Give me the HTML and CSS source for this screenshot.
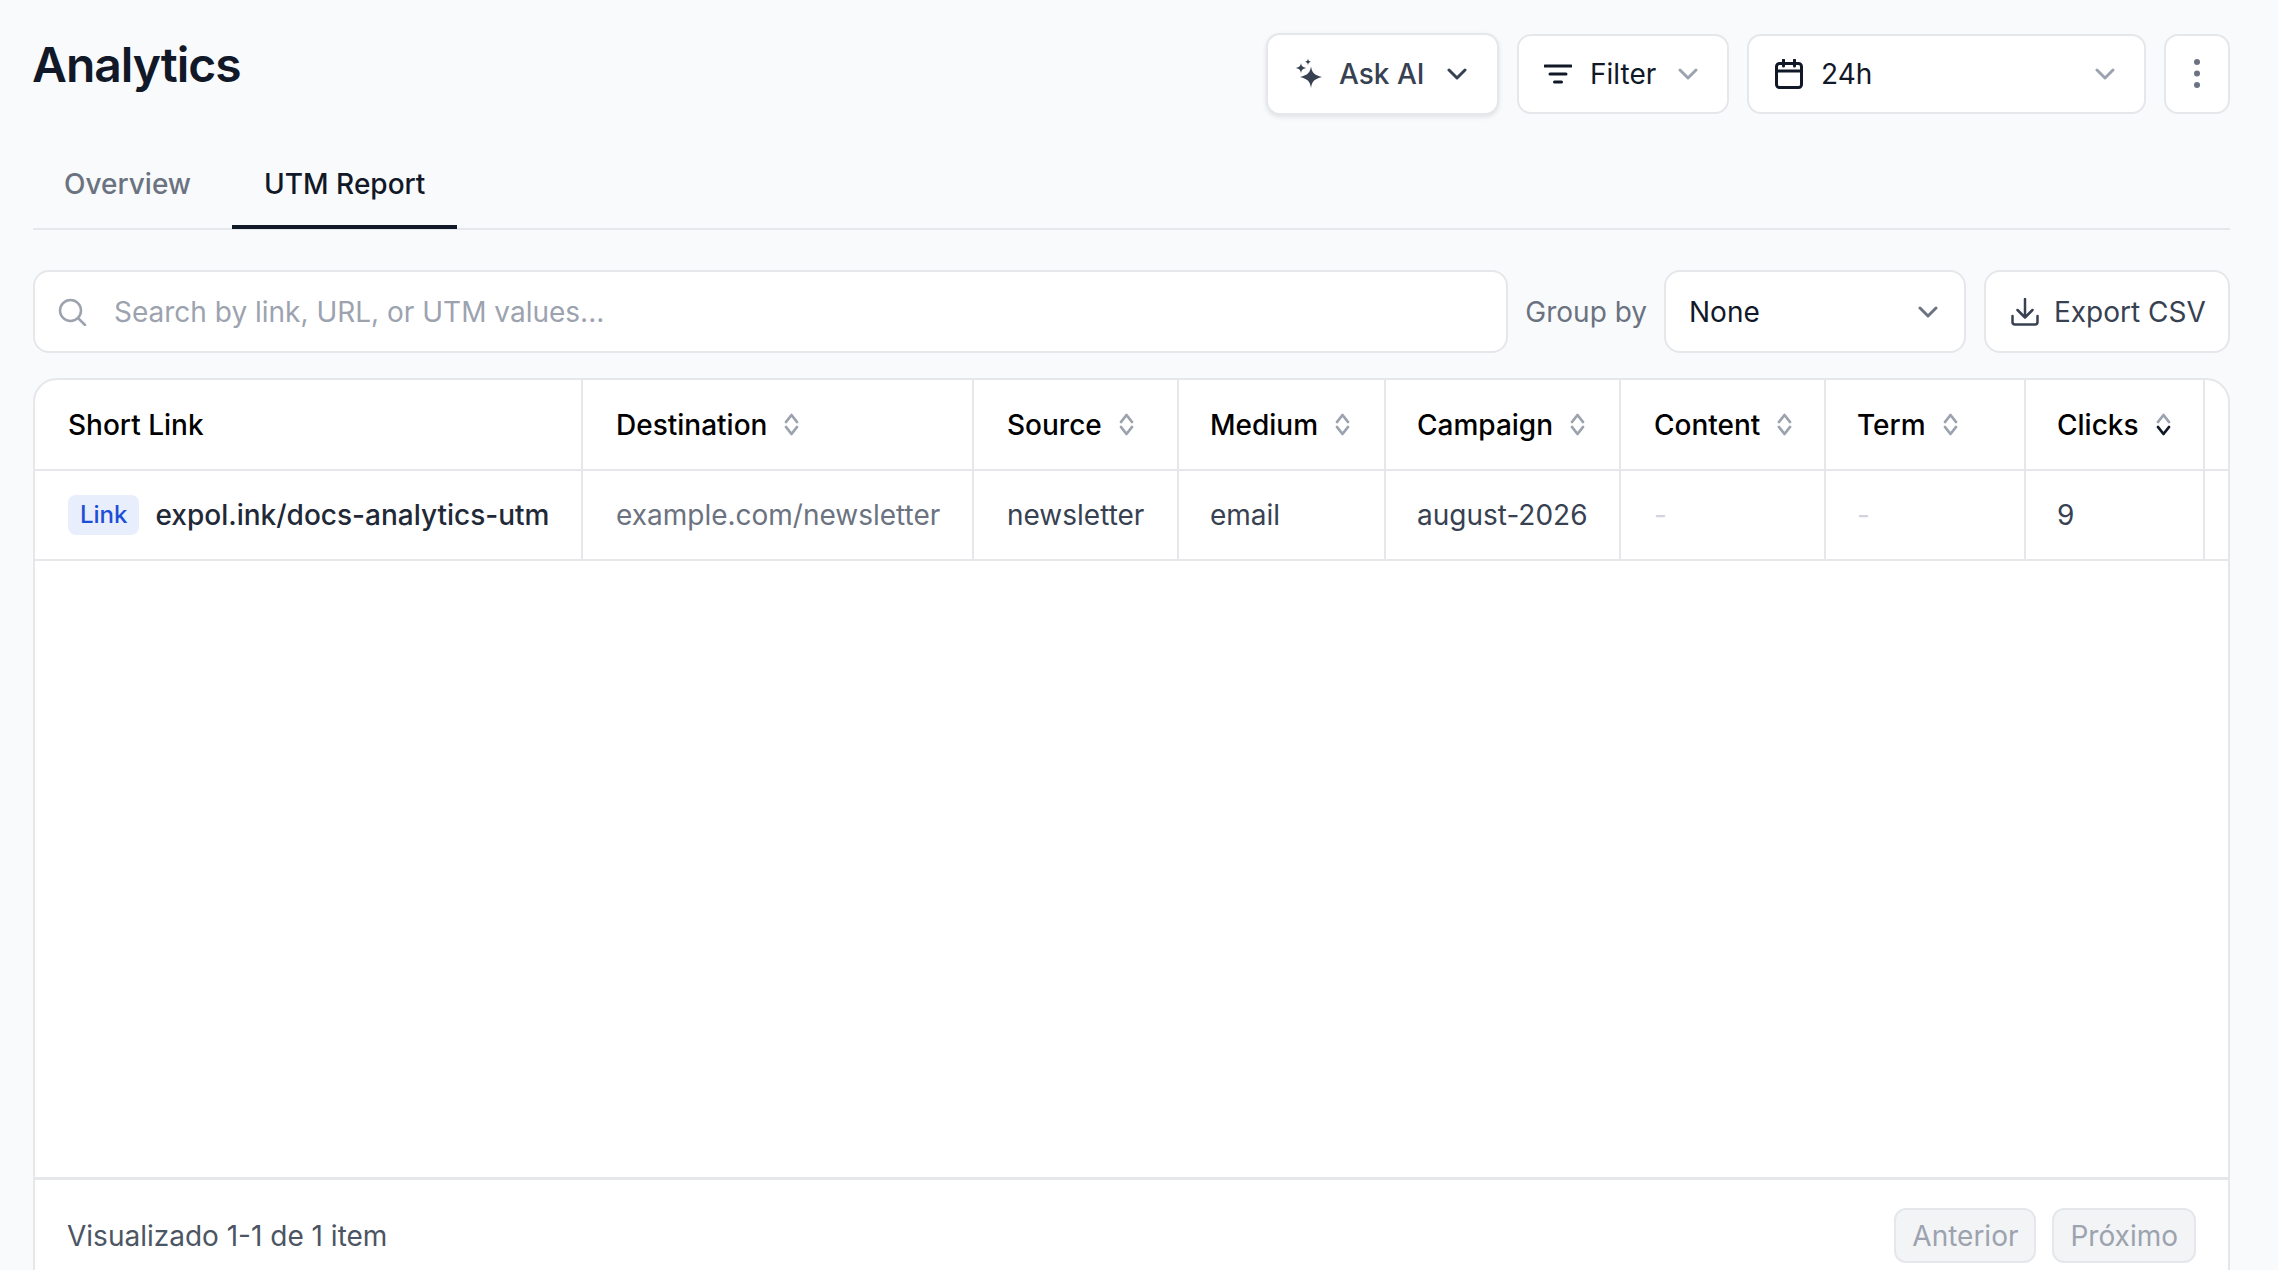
FILE: index.html
```html
<!DOCTYPE html>
<html lang="en">
<head>
  <meta charset="UTF-8">
  <title>Analytics</title>
  <link rel="stylesheet" href="styles.css">
</head>
<body>
  <div class="page">
    <div class="header">
      <h1>Analytics</h1>
      <div class="header-actions">
        <button class="btn btn-ai">
          <svg class="icon-sparkle" width="34" height="34" viewBox="0 0 34 34" fill="currentColor">
            <path d="M21 9.500c1 6 3 8.500 11 10.500-8 2-10 4.500-11 11-1-6.500-3-9-11-11 8-2 10-4.500 11-10.500z"/>
            <path d="M11 6c.5 3 1.400 4 5 5-3.600 1-4.500 2-5 5.500-.5-3.500-1.400-4.500-5-5.500 3.600-1 4.500-2 5-5z"/>
            <path d="M18 1.500c.3 2 .8 2.600 3 3.300-2.200.7-2.700 1.300-3 3.400-.3-2.100-.8-2.700-3-3.400 2.200-.7 2.700-1.300 3-3.300z"/>
          </svg>
          <span class="btn-ai-label">Ask AI</span>
          <svg class="chevron chevron-dark" width="20" height="12" viewBox="0 0 20 12"><path d="M2 2l8 8 8-8"/></svg>
        </button>
        <button class="btn btn-filter">
          <svg class="icon-filter" width="28" height="20" viewBox="0 0 28 20"><path d="M1 2h26M6 10h16M10.500 18h7"/></svg>
          <span>Filter</span>
          <svg class="chevron" width="20" height="12" viewBox="0 0 20 12"><path d="M2 2l8 8 8-8"/></svg>
        </button>
        <button class="btn btn-range">
          <svg class="icon-calendar" width="28" height="30" viewBox="0 0 28 30"><rect x="1.500" y="4.500" width="25" height="24" rx="3"/><path d="M1.500 12h25M8.500 1v6M19.500 1v6"/></svg>
          <span class="btn-range-label">24h</span>
          <svg class="chevron" width="20" height="12" viewBox="0 0 20 12"><path d="M2 2l8 8 8-8"/></svg>
        </button>
        <button class="btn btn-more">
          <svg width="6" height="30" viewBox="0 0 6 30" fill="#6b7280"><circle cx="3" cy="3" r="3"/><circle cx="3" cy="14.500" r="3"/><circle cx="3" cy="26" r="3"/></svg>
        </button>
      </div>
    </div>

    <div class="tabs">
      <div class="tab">Overview</div>
      <div class="tab tab-active">UTM Report</div>
    </div>

    <div class="toolbar">
      <div class="search">
        <svg class="icon-search" width="29" height="28" viewBox="0 0 29 28"><circle cx="12.500" cy="12.500" r="10.500"/><path d="M20.500 20.500l6.500 6.500"/></svg>
        <span>Search by link, URL, or UTM values...</span>
      </div>
      <span class="group-label">Group by</span>
      <div class="select">
        <span>None</span>
        <svg class="chevron chevron-mid" width="20" height="12" viewBox="0 0 20 12"><path d="M2 2l8 8 8-8"/></svg>
      </div>
      <button class="btn-export">
        <svg class="icon-export" width="28" height="28" viewBox="0 0 28 28"><path d="M14 1v18M6.500 12l7.500 7.500 7.500-7.500M1.500 18v6a2.500 2.500 0 0 0 2.500 2.500h20a2.500 2.500 0 0 0 2.500-2.500v-6"/></svg>
        <span>Export CSV</span>
      </button>
    </div>

    <div class="card">
      <div class="table-wrap">
        <table class="table">
          <colgroup>
            <col class="col-link"><col class="col-dest"><col class="col-source"><col class="col-medium"><col class="col-campaign"><col class="col-content"><col class="col-term"><col class="col-clicks"><col>
          </colgroup>
          <thead>
            <tr>
              <th>Short Link</th>
              <th><span class="th-inner">Destination <svg class="sort" width="15" height="23" viewBox="0 0 15 23"><path d="M2 9l5.500-7 5.500 7M2 14l5.500 7 5.500-7"/></svg></span></th>
              <th><span class="th-inner">Source <svg class="sort" width="15" height="23" viewBox="0 0 15 23"><path d="M2 9l5.500-7 5.500 7M2 14l5.500 7 5.500-7"/></svg></span></th>
              <th class="tight"><span class="th-inner">Medium <svg class="sort" width="15" height="23" viewBox="0 0 15 23"><path d="M2 9l5.500-7 5.500 7M2 14l5.500 7 5.500-7"/></svg></span></th>
              <th class="tight"><span class="th-inner">Campaign <svg class="sort" width="15" height="23" viewBox="0 0 15 23"><path d="M2 9l5.500-7 5.500 7M2 14l5.500 7 5.500-7"/></svg></span></th>
              <th><span class="th-inner">Content <svg class="sort" width="15" height="23" viewBox="0 0 15 23"><path d="M2 9l5.500-7 5.500 7M2 14l5.500 7 5.500-7"/></svg></span></th>
              <th class="tight"><span class="th-inner">Term <svg class="sort" width="15" height="23" viewBox="0 0 15 23"><path d="M2 9l5.500-7 5.500 7M2 14l5.500 7 5.500-7"/></svg></span></th>
              <th class="tight"><span class="th-inner">Clicks <svg class="sort" width="15" height="23" viewBox="0 0 15 23"><path d="M2 9l5.500-7 5.500 7"/><path class="sort-active" d="M2 14l5.500 7 5.500-7"/></svg></span></th>
              <th class="last"></th>
            </tr>
          </thead>
          <tbody>
            <tr>
              <td><span class="link-cell"><span class="badge">Link</span><span class="short-link">expol.ink/docs-analytics-utm</span></span></td>
              <td class="muted">example.com/newsletter</td>
              <td>newsletter</td>
              <td class="tight">email</td>
              <td class="tight">august-2026</td>
              <td class="empty">-</td>
              <td class="empty tight">-</td>
              <td class="tight">9</td>
              <td class="last"></td>
            </tr>
          </tbody>
        </table>
      </div>
      <div class="footer">
        <span class="footer-text">Visualizado 1-1 de 1 item</span>
        <div class="pager">
          <button class="pager-btn">Anterior</button>
          <button class="pager-btn">Próximo</button>
        </div>
      </div>
    </div>
  </div>
</body>
</html>
```

FILE: styles.css
```css
html, body {
  margin: 0;
  height: 100%;
  overflow: hidden;
}

body {
  font-family: Inter, "Noto Sans", sans-serif;
  font-size: 28px;
  background-color: #f9fafc;
  color: #111827;
}

button {
  font-family: inherit;
  font-size: inherit;
  cursor: pointer;
}

.page {
  padding: 33px 48px 0 33px;
}

/* top bar */
.header {
  display: flex;
  justify-content: space-between;
  align-items: flex-start;
  height: 81px;
}

h1 {
  margin: 0 0 0 -1px;
  font-size: 48px;
  font-weight: 600;
  line-height: 64px;
  letter-spacing: -1px;
  color: #111827;
}

.header-actions {
  display: flex;
  align-items: center;
  gap: 18px;
}

.btn {
  display: flex;
  align-items: center;
  height: 80px;
  padding: 0;
  background-color: white;
  border: 2px solid #e5e7eb;
  border-radius: 14px;
  color: #111827;
}

.btn-ai {
  width: 233px;
  height: 82px;
  padding-left: 22px;
  color: #374151;
  font-weight: 500;
  box-shadow: 0 2px 5px rgba(0, 0, 0, 0.1);
}

.btn-ai-label {
  margin-left: 15px;
  margin-right: 23px;
}

.btn-filter {
  width: 212px;
  padding-left: 25px;
  gap: 18px;
}

.btn-filter .chevron {
  margin-left: 4px;
}

.btn-range {
  width: 399px;
  padding-left: 26px;
}

.btn-range-label {
  margin-left: 18px;
  flex: 1;
  text-align: left;
}

.btn-range .chevron {
  margin-right: 29px;
}

.btn-more {
  width: 66px;
  justify-content: center;
}

.chevron {
  fill: none;
  stroke: #9ca3af;
  stroke-width: 3;
  stroke-linecap: round;
  stroke-linejoin: round;
}

.chevron-dark {
  stroke: #374151;
}

.chevron-mid {
  stroke: #6b7280;
}

.icon-filter, .icon-calendar, .icon-search, .icon-export, .sort {
  fill: none;
  stroke-linecap: round;
  stroke-linejoin: round;
}

.icon-filter {
  stroke: #111827;
  stroke-width: 3;
}

.icon-calendar {
  stroke: #111827;
  stroke-width: 3;
}

/* tabs */
.tabs {
  display: flex;
  gap: 9px;
  height: 116px;
  border-bottom: 2px solid #e5e7eb;
  box-sizing: border-box;
}

.tab {
  padding: 53px 32px 0;
  font-weight: 500;
  color: #6b7280;
}

.tab:first-child {
  padding-left: 31px;
}

.tab-active {
  color: #111827;
  border-bottom: 4px solid #111827;
  margin-bottom: -1px;
}

/* search row */
.toolbar {
  display: flex;
  align-items: center;
  height: 83px;
  margin-top: 40px;
}

.search {
  display: flex;
  align-items: center;
  flex: 1;
  height: 100%;
  box-sizing: border-box;
  padding-left: 23px;
  gap: 27px;
  background-color: white;
  border: 2px solid #e5e7eb;
  border-radius: 16px;
  color: #9ca3af;
}

.icon-search {
  stroke: #9ca3af;
  stroke-width: 2.500;
}

.group-label {
  margin: 0 17px;
  color: #6b7280;
}

.select {
  display: flex;
  align-items: center;
  justify-content: space-between;
  width: 302px;
  height: 100%;
  box-sizing: border-box;
  padding: 0 26px 0 23px;
  background-color: white;
  border: 2px solid #e5e7eb;
  border-radius: 16px;
}

.btn-export {
  display: flex;
  align-items: center;
  gap: 15px;
  width: 246px;
  height: 100%;
  margin-left: 18px;
  padding: 0 0 0 25px;
  background-color: white;
  border: 2px solid #e5e7eb;
  border-radius: 16px;
  color: #374151;
}

.icon-export {
  stroke: #374151;
  stroke-width: 2.500;
}

/* table */
.card {
  margin-top: 25px;
  background-color: white;
  border: 2px solid #e5e7eb;
  border-radius: 24px;
  overflow: hidden;
}

.table-wrap {
  height: 797px;
}

.table {
  width: 100%;
  table-layout: fixed;
  border-collapse: separate;
  border-spacing: 0;
}

.col-link { width: 548px; }
.col-dest { width: 391px; }
.col-source { width: 205px; }
.col-medium { width: 207px; }
.col-campaign { width: 235px; }
.col-content { width: 205px; }
.col-term { width: 200px; }
.col-clicks { width: 179px; }

th, td {
  padding: 0 0 0 33px;
  text-align: left;
  white-space: nowrap;
  box-sizing: border-box;
  border-right: 2px solid #e5e7eb;
  border-bottom: 2px solid #e5e7eb;
}

th {
  height: 91px;
  font-weight: 500;
  color: #000;
}

td {
  height: 90px;
  color: #374151;
}

th.tight, td.tight {
  padding-left: 31px;
}

th.last, td.last {
  border-right: none;
  padding: 0;
}

.th-inner {
  display: inline-flex;
  align-items: center;
  gap: 17px;
}

.sort {
  stroke: #9ca3af;
  stroke-width: 2.800;
}

.sort-active {
  stroke: #111827;
}

.link-cell {
  display: flex;
  align-items: center;
  gap: 16px;
}

.badge {
  padding: 0 12px;
  height: 40px;
  line-height: 40px;
  font-size: 24px;
  font-weight: 500;
  color: #1d4ed8;
  background-color: #e8eefc;
  border-radius: 8px;
}

.short-link {
  color: #1f2937;
  font-weight: 500;
}

.muted {
  color: #6b7280;
}

.empty {
  color: #d1d5db;
}

/* pagination */
.footer {
  display: flex;
  justify-content: space-between;
  align-items: center;
  padding: 28px 32px 28px 32px;
  border-top: 3px solid #e5e7eb;
}

.footer-text {
  color: #4b5563;
}

.pager {
  display: flex;
  gap: 16px;
}

.pager-btn {
  height: 55px;
  padding: 0 16px;
  background-color: #f3f4f6;
  border: 2px solid #e5e7eb;
  border-radius: 12px;
  color: #9ca3af;
}
```
